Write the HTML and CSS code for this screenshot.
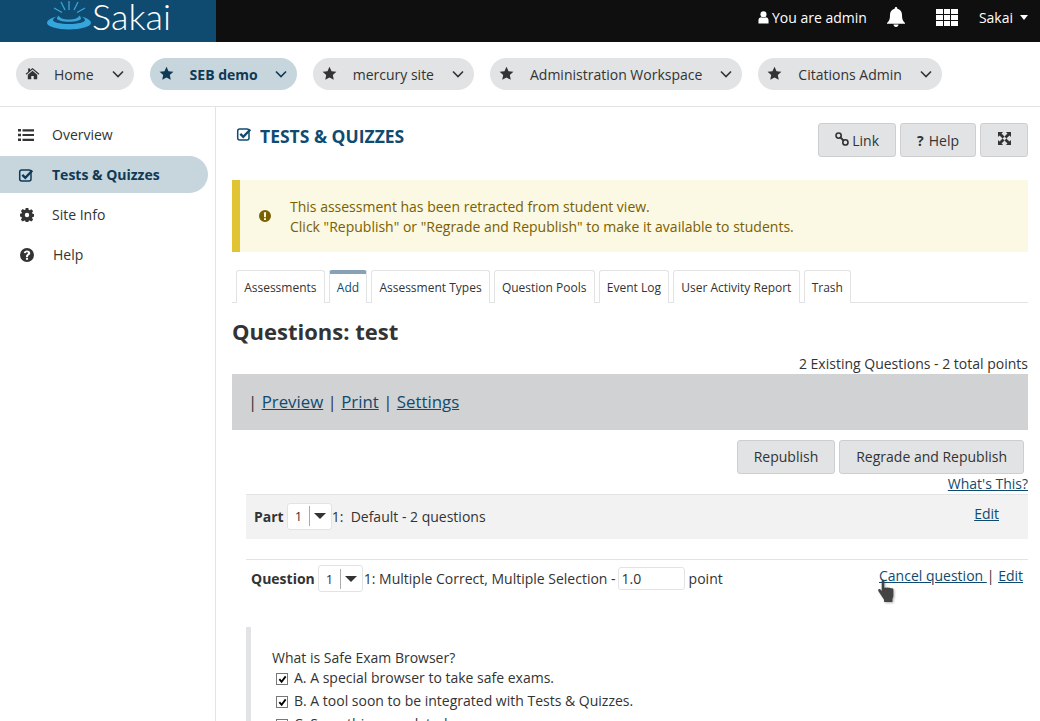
FILE: index.html
```html
<!DOCTYPE html>
<html lang="en">
<head>
    <meta charset="UTF-8">
    <meta name="viewport" content="width=device-width, initial-scale=1.0">
    <title>Tests &amp; Quizzes</title>
    <link rel="stylesheet" href="styles.css">
</head>
<body>
    <svg class="icon-defs" aria-hidden="true">
        <defs>
            <symbol id="i-star" viewBox="0 0 24 24"><path d="M12 1l3.300 7.200 7.700.9-5.700 5.300 1.500 7.700L12 18.300l-6.800 3.800 1.500-7.700L1 9.100l7.700-.9z"/></symbol>
            <symbol id="i-chev" viewBox="0 0 12 8"><path d="M1 1.500l5 5 5-5" fill="none" stroke="currentColor" stroke-width="1.600"/></symbol>
            <symbol id="i-check" viewBox="0 0 16 16"><rect x="1.700" y="3" width="11.300" height="11" rx="2" fill="none" stroke="currentColor" stroke-width="1.500"/><path d="M4.300 7.800l3 3 7-7.300" fill="none" stroke="currentColor" stroke-width="2.400"/></symbol>
            <symbol id="i-tick" viewBox="0 0 10 10"><path d="M1.500 4.500l2.500 3 4.500-6" fill="none" stroke="#000" stroke-width="2"/></symbol>
        </defs>
    </svg>

    <header class="topbar">
        <a class="logo" href="#">
            <svg class="logo-mark" viewBox="0 0 46 30">
                <path d="M23 1v9M15 2l4 8M32 2l-4 8M8 8l8 4.500M39 8l-8 4.500" stroke="#35a5dc" stroke-width="1.300" fill="none"/>
                <path d="M1 23c0-3 5-5.500 10-6.500-2.500 1-4 2.300-4 3.600 0 2.400 7 4 16 4s16-1.600 16-4c0-1.300-1.500-2.600-4-3.600 5 1 10 3.500 10 6.500 0 3.500-10 6.500-22 6.500S1 26.500 1 23z" fill="#35a5dc"/>
                <path d="M13 15.500c0 2.500 4.500 4 10 4s10-1.500 10-4c1.500.9 2 2 2 3 0 1.900-5.400 3.200-12 3.200s-12-1.300-12-3.200c0-1 .5-2.100 2-3z" fill="#35a5dc"/>
            </svg>
            <span class="logo-text">Sakai</span>
        </a>
        <div class="top-right">
            <span class="top-user">
                <svg class="user-icon" viewBox="0 0 12 14"><circle cx="6" cy="3.600" r="3.300"/><path d="M0.500 13.500V10c0-2 1.500-3.200 3-3.200.6.500 1.500.8 2.500.8s1.900-.3 2.500-.8c1.500 0 3 1.200 3 3.200v3.500z"/></svg>
                You are admin
            </span>
            <svg class="bell-icon" viewBox="0 0 18 20"><path d="M9 0c.8 0 1.300.6 1.300 1.300v.4C13 2.300 15 4.600 15 7.400c0 5 1 6.600 3 8.600v.8H0V16c2-2 3-3.600 3-8.600 0-2.800 2-5.100 4.700-5.700v-.4C7.700.6 8.200 0 9 0z"/><path d="M6.500 17.600h5c0 1.400-1.100 2.400-2.500 2.400s-2.500-1-2.500-2.400z"/></svg>
            <span class="apps-grid">
                <i></i><i></i><i></i><i></i><i></i><i></i><i></i><i></i><i></i>
            </span>
            <span class="top-site">Sakai <b class="caret"></b></span>
        </div>
    </header>

    <nav class="site-nav">
        <a class="site-pill home" href="#">
            <svg class="pill-icon" viewBox="0 0 24 24"><path d="M12 3l11 9.500-1.300 1.500L12 5.700 2.300 14 1 12.500 5 9V4h3v2.400z"/><path d="M12 7.500l7.500 6.400V21H14v-5h-4v5H4.500v-7.100z"/></svg>
            <span class="pill-name">Home</span>
            <svg class="pill-chev"><use href="#i-chev"/></svg>
        </a>
        <a class="site-pill active" href="#">
            <svg class="pill-icon"><use href="#i-star"/></svg>
            <span class="pill-name">SEB demo</span>
            <svg class="pill-chev"><use href="#i-chev"/></svg>
        </a>
        <a class="site-pill" href="#">
            <svg class="pill-icon"><use href="#i-star"/></svg>
            <span class="pill-name">mercury site</span>
            <svg class="pill-chev"><use href="#i-chev"/></svg>
        </a>
        <a class="site-pill" href="#">
            <svg class="pill-icon"><use href="#i-star"/></svg>
            <span class="pill-name">Administration Workspace</span>
            <svg class="pill-chev"><use href="#i-chev"/></svg>
        </a>
        <a class="site-pill" href="#">
            <svg class="pill-icon"><use href="#i-star"/></svg>
            <span class="pill-name">Citations Admin</span>
            <svg class="pill-chev"><use href="#i-chev"/></svg>
        </a>
    </nav>

    <div class="layout">
        <aside class="sidebar">
            <a class="tool" href="#">
                <svg class="tool-icon" viewBox="0 0 16 14"><path d="M0 1h3v2.500H0zM0 5.700h3v2.500H0zM0 10.500h3V13H0zM4.500 1.200H16v2.200H4.500zM4.500 5.900H16v2.200H4.500zM4.500 10.700H16v2.200H4.500z"/></svg>
                Overview
            </a>
            <a class="tool active" href="#">
                <svg class="tool-icon"><use href="#i-check"/></svg>
                Tests &amp; Quizzes
            </a>
            <a class="tool" href="#">
                <svg class="tool-icon small" viewBox="0 0 16 16"><path fill-rule="evenodd" d="M6.500 0h3l.4 2.100 1.200.5 1.800-1.200 2.100 2.100-1.200 1.800.5 1.200 1.700.4v3l-1.700.4-.5 1.200 1.200 1.800-2.100 2.100-1.800-1.200-1.200.5-.4 1.700h-3l-.4-1.700-1.200-.5-1.800 1.200-2.100-2.100 1.200-1.800-.5-1.200L0 9.700v-3l1.700-.4.500-1.200L1 3.300l2.100-2.100 1.800 1.200 1.200-.5zM8 5.500a2.500 2.500 0 1 0 0 5 2.500 2.500 0 0 0 0-5z"/></svg>
                Site Info
            </a>
            <a class="tool" href="#">
                <svg class="tool-icon small" viewBox="0 0 16 16"><path fill-rule="evenodd" d="M8 0a8 8 0 1 1 0 16A8 8 0 0 1 8 0zM6.800 11v2.300h2.400V11zM8 2.800c-2 0-3.400 1.100-3.700 2.900l2.200.4c.1-.8.700-1.200 1.400-1.200.8 0 1.300.4 1.300.9 0 .5-.4.800-1 1.200-.9.600-1.400 1.300-1.400 2.300v.9h2.400v-.6c0-.5.200-.7.900-1.200 1-.7 1.600-1.400 1.600-2.500 0-1.800-1.500-3.100-3.700-3.100z"/></svg>
                <span class="tool-help">Help</span>
            </a>
        </aside>

        <main class="content">
            <div class="tool-title-row">
                <h2 class="tool-title">
                    <svg class="title-icon"><use href="#i-check"/></svg>
                    TESTS &amp; QUIZZES
                </h2>
                <div class="tool-actions">
                    <a class="btn" href="#">
                        <svg class="link-icon" viewBox="0 0 14 14"><circle cx="3.600" cy="3.600" r="2.600" fill="none" stroke="currentColor" stroke-width="1.600"/><circle cx="10.400" cy="10.400" r="2.600" fill="none" stroke="currentColor" stroke-width="1.600"/><path d="M5 5l4 4" stroke="currentColor" stroke-width="1.800"/></svg>
                        Link
                    </a>
                    <a class="btn btn-help" href="#"><b>?</b> Help</a>
                    <a class="btn btn-icon" href="#">
                        <svg class="expand-icon" viewBox="0 0 14 14"><path d="M0 0h5.500L3.800 1.700 7 4.900 4.900 7 1.700 3.800 0 5.500zM14 0v5.500l-1.700-1.700L9.100 7 7 4.900l3.200-3.200L8.500 0zM0 14V8.500l1.700 1.700L4.900 7 7 9.100l-3.200 3.200L5.500 14zM14 14H8.500l1.700-1.700L7 9.100 9.100 7l3.200 3.200L14 8.500z"/></svg>
                    </a>
                </div>
            </div>

            <div class="alert">
                <svg class="alert-icon" viewBox="0 0 12 12"><path fill-rule="evenodd" d="M6 0a6 6 0 1 1 0 12A6 6 0 0 1 6 0zM4.900 2.200l.2 5h1.800l.2-5zM5 8.200V10h2V8.200z"/></svg>
                <div>
                    This assessment has been retracted from student view.<br>
                    Click "Republish" or "Regrade and Republish" to make it available to students.
                </div>
            </div>

            <ul class="tabs">
                <li><a href="#">Assessments</a></li>
                <li class="current"><a href="#">Add</a></li>
                <li><a href="#">Assessment Types</a></li>
                <li><a href="#">Question Pools</a></li>
                <li><a href="#">Event Log</a></li>
                <li><a href="#">User Activity Report</a></li>
                <li><a href="#">Trash</a></li>
            </ul>

            <h1 class="page-title">Questions: test</h1>
            <div class="existing">2 Existing Questions - 2 total points</div>

            <div class="toolbar">
                | <a href="#">Preview</a> | <a href="#">Print</a> | <a href="#">Settings</a>
            </div>

            <div class="publish-row">
                <a class="btn btn-big" href="#">Republish</a>
                <a class="btn btn-big" href="#">Regrade and Republish</a>
            </div>
            <div class="whats-this"><a href="#">What's This?</a></div>

            <div class="part-row">
                <b>Part</b>
                <span class="num-select"><span class="num-value">1</span><b class="caret dark"></b></span>
                <span>1:&nbsp; Default - 2 questions</span>
                <a class="part-edit" href="#">Edit</a>
            </div>

            <div class="question-row">
                <b>Question</b>
                <span class="num-select"><span class="num-value">1</span><b class="caret dark"></b></span>
                <span>1: Multiple Correct, Multiple Selection -</span>
                <input class="points" type="text" value="1.0">
                <span>point</span>
                <span class="question-links">
                    <span class="cancel-wrap"><a href="#">Cancel question&nbsp;</a><svg class="hand-cursor" viewBox="0 0 18 24"><path d="M4.500 1.200C4.500.5 5 0 5.800 0s1.400.5 1.400 1.200V8l1.300-.3.500.3 1.800-.2.600.4 1.700-.1.700.5 1.700.1c.8.100 1.200.7 1.200 1.400V17l-1 3v3H7v-2.500L1 11.500c-.5-1 0-1.800.8-2 .7-.2 1.300.1 1.700.7l1 1.500z" fill="#444"/></svg></span>| <a href="#">Edit</a>
                </span>
            </div>

            <div class="question-body">
                <div class="question-text">What is Safe Exam Browser?</div>
                <div class="answer"><span class="answer-box"><svg class="answer-tick"><use href="#i-tick"/></svg></span>A. A special browser to take safe exams.</div>
                <div class="answer"><span class="answer-box"><svg class="answer-tick"><use href="#i-tick"/></svg></span>B. A tool soon to be integrated with Tests &amp; Quizzes.</div>
                <div class="answer"><span class="answer-box"><svg class="answer-tick"><use href="#i-tick"/></svg></span>C. Something unrelated.</div>
            </div>
        </main>
    </div>
</body>
</html>
```

FILE: styles.css
```css
* {
    box-sizing: border-box;
}
html, body {
    height: 721px;
    overflow: hidden;
}
body {
    margin: 0;
    font-family: "Open Sans", sans-serif;
    font-size: 14px;
    color: #333;
    background: #fff;
}
a {
    color: #0f4b70;
}
.icon-defs {
    display: none;
}
.topbar {
    display: flex;
    justify-content: space-between;
    height: 42px;
    background: #0f0f0f;
    color: #fff;
}
.logo {
    display: flex;
    width: 216px;
    height: 42px;
    padding: 0 0 0 46px;
    background: #0f4b70;
    color: #fff;
    text-decoration: none;
}
.logo-mark {
    width: 46px;
    height: 30px;
}
.logo-text {
    height: 36px;
    font-family: Lato, sans-serif;
    font-size: 36px;
    font-weight: 300;
    line-height: 33px;
}
.top-right {
    display: flex;
    align-items: center;
    height: 34px;
    padding: 0 12px 0 0;
}
.top-user {
    display: flex;
    align-items: center;
    gap: 3px;
    margin-right: 20px;
}
.user-icon {
    width: 11px;
    height: 13px;
    fill: #fff;
}
.bell-icon {
    width: 18px;
    height: 20px;
    margin-right: 31px;
    fill: #fff;
}
.apps-grid {
    display: grid;
    grid-template-columns: repeat(3, 6.670px);
    grid-auto-rows: 5px;
    gap: 1px;
    margin-right: 21px;
}
.apps-grid i {
    background: #fff;
}
.top-site {
    display: flex;
    align-items: center;
    gap: 7px;
}
.caret {
    display: inline-block;
    border-top: 5px solid #fff;
    border-left: 4px solid transparent;
    border-right: 4px solid transparent;
}
.caret.dark {
    border-top: 6px solid #333;
    border-left: 6px solid transparent;
    border-right: 6px solid transparent;
}
.site-nav {
    display: flex;
    gap: 16px;
    height: 65px;
    padding: 16px 16px 0;
    border-bottom: 1px solid #e1e3e5;
}
.site-pill {
    display: flex;
    align-items: center;
    height: 32px;
    padding: 0 10px 0 9px;
    border-radius: 16px;
    background: #e1e3e5;
    color: #333;
    text-decoration: none;
}
.site-pill.active {
    background: #c7d5dd;
    color: #0f3a55;
    font-weight: 700;
}
.pill-icon {
    width: 15px;
    height: 15px;
    margin: -2px 16px 0 0;
    fill: currentColor;
}
.home .pill-icon {
    margin-right: 14px;
}
.pill-name {
    margin-right: 18px;
}
.active .pill-name {
    margin-right: 17px;
}
.pill-chev {
    width: 12px;
    height: 8px;
}
.layout {
    display: flex;
    height: 614px;
}
.sidebar {
    flex: none;
    width: 216px;
    padding-top: 9px;
    padding-right: 7px;
    border-right: 1px solid #e1e3e5;
}
.tool {
    display: flex;
    align-items: center;
    height: 37px;
    margin-bottom: 3px;
    padding-left: 18px;
    border-radius: 0 19px 19px 0;
    color: #333;
    text-decoration: none;
}
.tool.active {
    background: #c7d5dd;
    color: #0f3a55;
    font-weight: 700;
}
.tool-icon {
    flex: none;
    width: 16px;
    height: 16px;
    margin-right: 18px;
    fill: currentColor;
}
.tool-icon.small {
    width: 14px;
    height: 14px;
    margin-left: 2px;
}
.tool-help {
    margin-left: 1px;
}
.content {
    flex: 1;
    min-width: 0;
    padding: 16px 12px 0 16px;
}
.tool-title-row {
    display: flex;
    justify-content: space-between;
    height: 57px;
}
.tool-title {
    display: flex;
    align-items: center;
    gap: 8px;
    height: 26px;
    margin: 0 0 0 4px;
    color: #0f4b70;
    font-size: 17.500px;
    font-weight: 700;
}
.title-icon {
    width: 16px;
    height: 16px;
    margin-top: -4px;
}
.tool-actions {
    display: flex;
    gap: 4px;
}
.btn {
    display: inline-flex;
    align-items: center;
    justify-content: center;
    gap: 3px;
    height: 34px;
    padding: 0 16px;
    border: 1px solid #ccced0;
    border-radius: 3px;
    background: #e1e3e5;
    color: #333;
    text-decoration: none;
}
.btn-help {
    gap: 5px;
}
.btn-icon {
    width: 48px;
    padding: 0 0 3px;
}
.link-icon {
    width: 14px;
    height: 14px;
    margin-top: -3px;
}
.expand-icon {
    width: 13px;
    height: 13px;
    fill: #333;
}
.alert {
    display: flex;
    align-items: center;
    height: 72px;
    padding: 2px 0 0 19px;
    border-left: 8px solid #e0c434;
    background: #fbf8e3;
    color: #7a6000;
    line-height: 20px;
}
.alert-icon {
    width: 12px;
    height: 12px;
    margin: -2px 19px 0 0;
    fill: #7a6000;
}
.tabs {
    display: flex;
    gap: 4px;
    height: 33px;
    margin: 18px 0 0;
    padding: 0 0 0 4px;
    list-style: none;
    border-bottom: 1px solid #e1e3e5;
    font-size: 12px;
}
.tabs a {
    display: flex;
    align-items: center;
    height: 33px;
    padding: 0 7.150px;
    border: 1px solid #e1e3e5;
    border-radius: 3px 3px 0 0;
    border-bottom: 0;
    background: #fff;
    color: #333;
    text-decoration: none;
}
.tabs .current a {
    padding-bottom: 3px;
    border-top: 4px solid #87a2b6;
    color: #0f4b70;
}
.page-title {
    margin: 14px 0 0;
    font-size: 22px;
    font-weight: 700;
    line-height: 28px;
}
.existing {
    margin-top: 9px;
    text-align: right;
    line-height: 20px;
}
.toolbar {
    height: 56px;
    padding-left: 16px;
    background: #d1d2d4;
    font-size: 16.830px;
    line-height: 56px;
}
.publish-row {
    display: flex;
    justify-content: flex-end;
    gap: 4px;
    margin-top: 10px;
    padding-right: 4px;
}
.btn-big {
    padding: 0 16px 2px;
}
.whats-this {
    text-align: right;
    line-height: 20px;
}
.part-row {
    display: flex;
    align-items: center;
    height: 45px;
    margin-left: 14px;
    padding: 0 0 2px 8px;
    border-top: 1px solid #e1e3e5;
    background: #f2f2f2;
}
.part-row .num-select {
    margin: 0 0 0 3px;
}
.part-edit {
    margin: -6px 29px 0 auto;
}
.num-select {
    display: inline-flex;
    align-items: center;
    width: 45px;
    height: 27px;
    border: 1px solid #e1e3e5;
    border-radius: 3px;
    background: #fff;
}
.num-value {
    display: block;
    width: 22px;
    padding-left: 7px;
    border-right: 1px solid #aaa;
    font-size: 13px;
    line-height: 20px;
}
.num-select .caret {
    margin-left: 4px;
}
.question-row {
    display: flex;
    align-items: center;
    height: 40px;
    margin: 20px 0 0 14px;
    padding: 0 0 2px 5px;
    border-top: 1px solid #e1e3e5;
}
.question-row .num-select {
    margin: 0 1px 0 3px;
}
.points {
    width: 67px;
    height: 23px;
    margin: 0 4px 0 2px;
    padding: 0 3px;
    border: 1px solid #e1e3e5;
    border-radius: 3px;
    font: inherit;
    color: #333;
}
.question-links {
    margin: -7px 5px 0 auto;
}
.cancel-wrap {
    position: relative;
}
.hand-cursor {
    position: absolute;
    left: -2px;
    top: 14px;
    width: 18px;
    height: 23px;
    filter: drop-shadow(1px 1px 1px rgba(0, 0, 0, 0.3));
}
.question-body {
    height: 120px;
    margin: 28px 0 0 14px;
    padding: 22px 0 0 21px;
    border-left: 5px solid #e1e3e5;
}
.question-text {
    line-height: 17px;
}
.answer {
    display: flex;
    align-items: center;
    height: 23px;
    padding-left: 4px;
}
.answer-box {
    display: flex;
    align-items: center;
    justify-content: center;
    width: 12px;
    height: 12px;
    margin: 3px 6px 0 0;
    border: 1.500px solid #777;
    background: #fff;
}
.answer-tick {
    width: 9px;
    height: 9px;
}
```
